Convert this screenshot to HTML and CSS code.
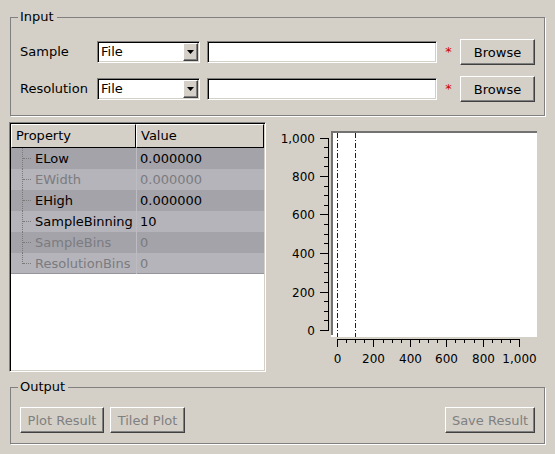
FILE: index.html
```html
<!DOCTYPE html>
<html>
<head>
<meta charset="utf-8">
<link rel="stylesheet" href="styles.css">
</head>
<body>
<div class="app">
  <fieldset class="group group-input">
    <legend>Input</legend>
    <div class="input-grid">
      <span class="lbl">Sample</span>
      <div class="combo"><span class="combo-text">File</span><span class="combo-btn"><svg width="7" height="4" viewBox="0 0 7 4"><path d="M0 0H7L3.5 4Z" fill="#000"/></svg></span></div>
      <div class="field"></div>
      <span class="req">*</span>
      <button class="btn btn-browse">Browse</button>

      <span class="lbl">Resolution</span>
      <div class="combo"><span class="combo-text">File</span><span class="combo-btn"><svg width="7" height="4" viewBox="0 0 7 4"><path d="M0 0H7L3.5 4Z" fill="#000"/></svg></span></div>
      <div class="field"></div>
      <span class="req">*</span>
      <button class="btn btn-browse">Browse</button>
    </div>
  </fieldset>

  <div class="middle">
    <div class="table">
      <div class="thead">
        <div class="th">Property</div>
        <div class="th">Value</div>
      </div>
      <div class="tbody">
        <div class="row dark"><div class="c1"><span class="branch"></span>ELow</div><div class="c2">0.000000</div></div>
        <div class="row light disabled"><div class="c1"><span class="branch"></span>EWidth</div><div class="c2">0.000000</div></div>
        <div class="row dark"><div class="c1"><span class="branch"></span>EHigh</div><div class="c2">0.000000</div></div>
        <div class="row light"><div class="c1"><span class="branch"></span>SampleBinning</div><div class="c2">10</div></div>
        <div class="row dark disabled"><div class="c1"><span class="branch"></span>SampleBins</div><div class="c2">0</div></div>
        <div class="row light disabled last"><div class="c1"><span class="branch"></span>ResolutionBins</div><div class="c2">0</div></div>
      </div>
    </div>

    <svg class="plot" width="279" height="250" viewBox="0 0 279 250">
      <rect x="65" y="9" width="206" height="206" fill="#fff"/>
      <rect x="65" y="9" width="206" height="2" fill="#727272"/>
      <rect x="65" y="9" width="2" height="204" fill="#727272"/>
      <g stroke="#0000ff" stroke-width="1" stroke-dasharray="5 2 1 2" fill="none">
        <path d="M71.5 11V215"/>
        <path d="M89.5 11V215"/>
      </g>
      <g stroke="#000" stroke-width="1" fill="none">
        <path d="M62.5 16V209"/>
        <path d="M54 16.5H63M54 54.5H63M54 92.5H63M54 131.5H63M54 170.5H63M54 208.5H63"/>
        <path d="M58 25.5H63M58 35.5H63M58 44.5H63M58 64.5H63M58 73.5H63M58 83.5H63M58 102.5H63M58 112.5H63M58 121.5H63M58 141.5H63M58 150.5H63M58 160.5H63M58 179.5H63M58 189.5H63M58 198.5H63"/>
        <path d="M71 217.5H254"/>
        <path d="M71.5 217V225M107.5 217V225M144.5 217V225M180.5 217V225M217.5 217V225M253.5 217V225"/>
        <path d="M80.5 217V221M89.5 217V221M98.5 217V221M117.5 217V221M126.5 217V221M135.5 217V221M153.5 217V221M162.5 217V221M171.5 217V221M189.5 217V221M198.5 217V221M208.5 217V221M226.5 217V221M235.5 217V221M244.5 217V221"/>
      </g>
      <g class="axis-label ylab">
        <text x="49" y="21">1,000</text>
        <text x="49" y="59">800</text>
        <text x="49" y="97">600</text>
        <text x="49" y="136">400</text>
        <text x="49" y="175">200</text>
        <text x="49" y="213">0</text>
      </g>
      <g class="axis-label xlab">
        <text x="71.5" y="241">0</text>
        <text x="107.5" y="241">200</text>
        <text x="144.5" y="241">400</text>
        <text x="180.5" y="241">600</text>
        <text x="217.5" y="241">800</text>
        <text x="253.5" y="241">1,000</text>
      </g>
    </svg>
  </div>

  <fieldset class="group group-output">
    <legend>Output</legend>
    <div class="out-row">
      <button class="btn btn-plot" disabled>Plot Result</button>
      <button class="btn btn-tiled" disabled>Tiled Plot</button>
      <button class="btn btn-save" disabled>Save Result</button>
    </div>
  </fieldset>
</div>
</body>
</html>
```

FILE: styles.css
```css
* { box-sizing: border-box; }
html, body { margin: 0; padding: 0; }
body {
  background: #d4d0c8;
  font-family: "DejaVu Sans", sans-serif;
  font-size: 13px;
  color: #000;
  width: 555px;
  height: 454px;
  overflow: hidden;
}
.app { padding: 9px 10px 0; }

.group {
  margin: 0;
  min-width: 0;
  border: 1px solid #808080;
  box-shadow: 1px 1px 0 #fff;
}
.group legend {
  padding: 0 3px 0 2px;
  margin-left: -2px;
  line-height: 16px;
}
.group-input { padding: 14px 9px 13px 9px; }
.group-output { padding: 12px 9px 10px 9px; margin-top: 7px; }

.input-grid {
  display: grid;
  grid-template-columns: 77px 103px 237px 23px 75px;
  grid-auto-rows: 26px;
  row-gap: 11px;
  align-items: center;
}
.lbl { line-height: 26px; }

.combo {
  height: 22px;
  display: flex;
  padding: 1px;
  background: #fff;
  border: 1px solid;
  border-color: #808080 #fff #fff #808080;
  box-shadow: inset 1px 1px 0 #000, inset -1px -1px 0 #d4d0c8;
}
.combo-text { flex: 1; line-height: 18px; padding-left: 2px; }
.combo-btn {
  width: 15px;
  height: 18px;
  display: flex;
  align-items: center;
  justify-content: center;
  background: #d4d0c8;
  border: 1px solid;
  border-color: #fff #404040 #404040 #fff;
  box-shadow: inset -1px -1px 0 #808080;
}

.field {
  margin-left: 7px;
  width: 230px;
  height: 22px;
  background: #fff;
  border: 1px solid;
  border-color: #808080 #fff #fff #808080;
  box-shadow: inset 1px 1px 0 #000, inset -1px -1px 0 #d4d0c8;
}
.req { color: #d00000; text-align: center; line-height: 26px; }

.btn {
  font: inherit;
  color: #000;
  height: 26px;
  padding: 0;
  background: #d4d0c8;
  border: 1px solid;
  border-color: #fff #404040 #404040 #fff;
  box-shadow: inset -1px -1px 0 #808080;
  border-radius: 0;
}
.btn:disabled { color: #808080; }
.btn-browse { width: 75px; }

.middle {
  display: flex;
  margin: 6px 0 0 -1px;
  height: 250px;
}
.table {
  width: 257px;
  height: 250px;
  padding: 1px;
  background: #fff;
  border: 1px solid;
  border-color: #808080 #fff #fff #808080;
  box-shadow: inset 1px 1px 0 #000, inset -1px -1px 0 #d4d0c8;
  display: flex;
  flex-direction: column;
}
.thead {
  display: grid;
  grid-template-columns: 125px 128px;
  height: 24px;
}
.th {
  background: #d4d0c8;
  border: 1px solid;
  border-color: #fff #000 #000 #fff;
  padding-left: 4px;
  line-height: 22px;
}
.row {
  display: grid;
  grid-template-columns: 125px 128px;
  height: 21px;
  line-height: 21px;
}
.row.dark { background: #a4a3aa; }
.row.light { background: #b5b4ba; }
.row.disabled { color: #7b7b80; }
.row.last { border-bottom: 1px solid #97969d; }
.c1 { display: flex; white-space: nowrap; }
.c2 { border-left: 1px solid #bdbcc2; padding-left: 3px; }
.branch {
  position: relative;
  width: 24px;
  flex: none;
}
.branch::before {
  content: "";
  position: absolute;
  left: 11px;
  top: 0;
  bottom: 0;
  border-left: 1px dotted #7a7a7a;
}
.last .branch::before { bottom: 10px; }
.branch::after {
  content: "";
  position: absolute;
  left: 12px;
  top: 10px;
  width: 8px;
  border-top: 1px dotted #7a7a7a;
}

.plot { display: block; shape-rendering: crispEdges; }
.axis-label text {
  font-family: "DejaVu Sans", sans-serif;
  font-size: 12px;
  fill: #000;
}
.ylab { text-anchor: end; }
.xlab { text-anchor: middle; }

.out-row { display: flex; gap: 6px; }
.btn-plot { width: 84px; }
.btn-tiled { width: 75px; }
.btn-save { width: 90px; margin-left: auto; }
```
